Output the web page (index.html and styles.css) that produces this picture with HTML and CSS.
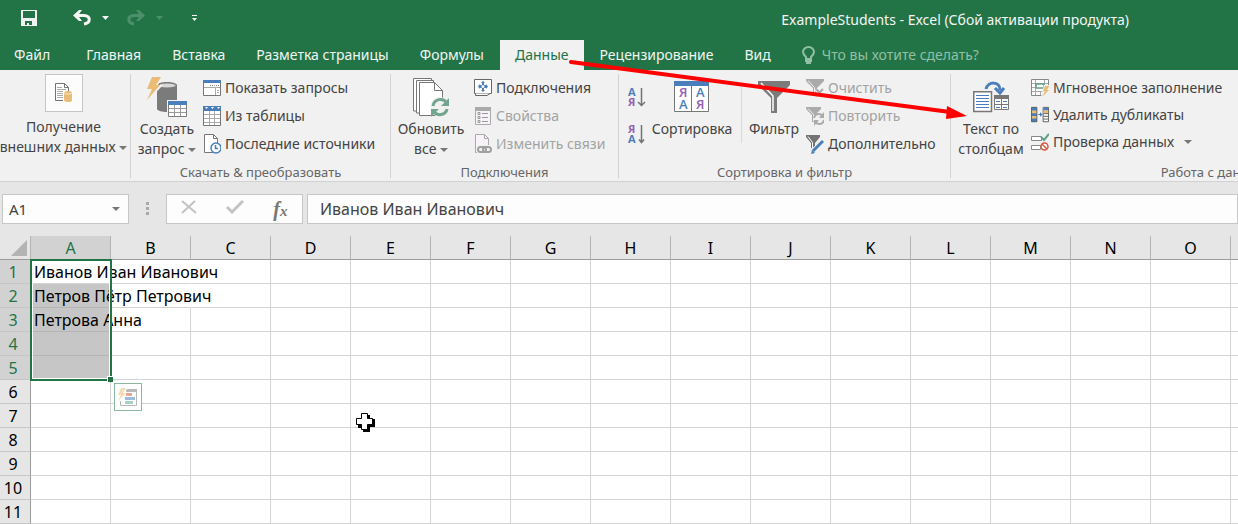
FILE: index.html
```html
<!DOCTYPE html>
<html lang="ru">
<head>
<meta charset="utf-8">
<title>ExampleStudents - Excel</title>
<link rel="stylesheet" href="styles.css">
</head>
<body>
<div class="app">
  <header class="titlebar">
    <div class="quick">
      <button class="qbtn save" aria-label="Сохранить"><svg width="16" height="16" viewBox="0 0 16 16"><path fill="#f0f3f1" fill-rule="evenodd" d="M0 0H16V16H0ZM2 1V8H14V1ZM4 11V15H6V13H8V15H11V11Z"/></svg></button>
      <button class="qbtn undo" aria-label="Отменить"><svg width="18" height="16" viewBox="0 0 18 16"><path fill="none" stroke="#f5f5f5" stroke-width="3" d="M3 5.500H11C18 6 18 13 11 14"/><path fill="#f5f5f5" d="M0 5.500 6 0H9L5 5.500 9 11H6Z"/></svg></button>
      <button class="qbtn drop" aria-label="Список отмены"><svg width="7" height="4"><path fill="#f5f5f5" d="M0 0H7L3.500 4Z"/></svg></button>
      <button class="qbtn redo" aria-label="Вернуть" disabled><svg width="18" height="16" viewBox="0 0 18 16"><path fill="none" stroke="#4e8f6b" stroke-width="3" d="M15 5.500H7C0 6 0 13 7 14"/><path fill="#4e8f6b" d="M18 5.500 12 0H9L13 5.500 9 11H12Z"/></svg></button>
      <button class="qbtn drop" aria-label="Список возврата" disabled><svg width="7" height="4"><path fill="#4e8f6b" d="M0 0H7L3.500 4Z"/></svg></button>
      <button class="qbtn more" aria-label="Настройка панели"><svg width="5" height="6"><path fill="#f5f5f5" d="M0 0H5V1H0ZM0 3H5L2.500 6Z"/></svg></button>
    </div>
    <h1 class="doc">ExampleStudents - Excel (Сбой активации продукта)</h1>
  </header>

  <nav class="tabs">
    <button class="tab file">Файл</button>
    <button class="tab">Главная</button>
    <button class="tab">Вставка</button>
    <button class="tab">Разметка страницы</button>
    <button class="tab">Формулы</button>
    <button class="tab active">Данные</button>
    <button class="tab">Рецензирование</button>
    <button class="tab">Вид</button>
    <button class="tab tell"><svg width="13" height="18" viewBox="0 0 13 18"><path fill="none" stroke="#93bfa5" stroke-width="2" d="M4 13V11C2 9 1 8 1 6A5.500 5 0 0 1 12 6C12 8 11 9 9 11V13Z"/><path fill="#93bfa5" d="M3 14H10V16H9V18H4V16H3Z"/></svg>Что вы хотите сделать?</button>
  </nav>

  <main class="ribbon">
    <section class="group get">
      <div class="body">
        <button class="big">
          <span class="pic"><span class="frame"><svg width="18" height="20" viewBox="0 0 18 20"><path fill="#fff" stroke="#737373" d="M.5.500H9.500L13.500 4.500V17.500H.5Z"/><path fill="none" stroke="#737373" d="M9.500.5V4.500H13.500"/><path stroke="#aaa" d="M2 4.500H7M2 6.500H11M2 8.500H11M2 10.500H9M2 12.500H9M2 14.500H9"/><path fill="#fff" d="M8 8H18V20H8Z"/><path fill="#e9bd77" d="M9 9.500C10 7.500 17 7.500 17 9.500V17.500C17 19.500 10 19.500 9 17.500Z"/><path fill="none" stroke="#fbe9c8" d="M9 10C11 11.500 15 11.500 17 10"/></svg></span></span>
          <span>Получение</span><span class="nw">внешних данных <i class="caret"></i></span>
        </button>
      </div>
    </section>

    <section class="group query">
      <div class="body">
        <button class="big w72">
          <span class="pic"><svg width="40" height="40" viewBox="0 0 40 40"><path fill="#7b7b7b" d="M10 8C11 4 29 4 30 8V32C29 36 11 36 10 32Z"/><ellipse cx="20" cy="8.500" rx="9" ry="2.500" fill="#d8d8d8" stroke="#7b7b7b"/><path fill="#f1f1f1" d="M4 0H15L11 8H16L0 25 5 12H0Z"/><path fill="#eabb73" d="M5 0H14L9 8H13L0 23 5 12H0Z"/><path fill="#f1f1f1" d="M20 23H40V40H20Z"/><path fill="#fff" stroke="#7b7b7b" d="M21.500 24.500H39.500V39.500H21.500Z"/><path fill="#4a7ebb" d="M21 24H40V28H21Z"/><path stroke="#999" d="M22 31.500H39M22 35.500H39M27.500 28V39M33.500 28V39"/></svg></span>
          <span>Создать</span><span class="nw">запрос <i class="caret"></i></span>
        </button>
        <div class="stack">
          <button class="small"><svg width="18" height="18" viewBox="0 0 18 18"><path fill="#fff" stroke="#777" d="M.5 1.500H17.500V16.500H.5Z"/><path fill="#4a7ebb" d="M0 1H18V4H0Z"/><path fill="none" stroke="#aaa" d="M1 8.500H17M12.500 8V16M14 11.500H16M14 13.500H16"/><path stroke="#888" stroke-dasharray="1 1" d="M7 6.500H16"/></svg>Показать запросы</button>
          <button class="small"><svg width="18" height="20" viewBox="0 0 18 20"><path fill="#fff" stroke="#777" d="M.5.500H17.500V19.500H.5Z"/><path fill="#4a7ebb" d="M0 0H18V5H0Z"/><path stroke="#aaa" d="M1 8.500H17M1 12.500H17M1 16.500H17M6.500 5V19M11.500 5V19"/><path fill="#fff" d="M2 1H5L3.500 3ZM8 1H11L9.500 3ZM14 1H17L15.500 3Z"/></svg>Из таблицы</button>
          <button class="small"><svg width="18" height="20" viewBox="0 0 18 20"><path fill="#fff" stroke="#777" d="M1.500.500H10.500L14.500 4.500V18.500H1.500Z"/><path fill="none" stroke="#777" d="M10.500.5V4.500H14.500"/><circle cx="13" cy="14" r="5" fill="#fff" stroke="#4a7ebb" stroke-width="1.500"/><path fill="none" stroke="#4a7ebb" stroke-width="1.500" d="M12.500 11V14.500H15"/></svg>Последние источники</button>
        </div>
      </div>
      <h2 class="caption">Скачать &amp; преобразовать</h2>
    </section>

    <section class="group conn">
      <div class="body">
        <button class="big w80">
          <span class="pic"><svg width="37" height="40" viewBox="0 0 37 40"><path fill="#fff" stroke="#777" d="M.5 34V1.500H18.500V34Z"/><path fill="#fff" stroke="#777" d="M3.500 36V3.500H20.500V36Z"/><path fill="#fff" stroke="#777" d="M6.500 5.500H21.500L29.500 13.500V38.500H6.500Z"/><path fill="none" stroke="#777" d="M21.500 5.500V13.500H29.500"/><circle cx="27" cy="30" r="10" fill="#f1f1f1"/><path fill="none" stroke="#71a590" stroke-width="3" d="M20 29C21 22 30 20 34 26M34 32C33 38 24 40 20 34"/><path fill="#71a590" d="M36 21V29H28ZM18 40V32H26Z"/></svg></span>
          <span>Обновить</span><span>все <i class="caret"></i></span>
        </button>
        <div class="stack">
          <button class="small"><svg width="18" height="18" viewBox="0 0 18 18"><path fill="#fff" stroke="#666" d="M.5.500H17.500V14.500H.5Z"/><path fill="#fff" stroke="#666" d="M1.500 14.500V16.500H13L16 14.500"/><path fill="#4a7ebb" d="M9 2 11 4H10V6H12V5L14 7.500 12 10V9H10V11H11L9 13 7 11H8V9H6V10L4 7.500 6 5V6H8V4H7Z"/><circle cx="9" cy="7.500" r="1.500" fill="#fff"/></svg>Подключения</button>
          <button class="small" disabled><svg width="18" height="18" viewBox="0 0 18 18"><path fill="#f8f3f9" stroke="#aaa" d="M1.500.500H16.500V17.500H1.500Z"/><path fill="#aaa" d="M1 0H17V4H1Z"/><path fill="none" stroke="#999" d="M8 6.500H14M8 10.500H14M8 14.500H14"/><path fill="none" stroke="#999" d="M4 5.500H6V7.500H4ZM4 9.500H6V11.500H4ZM4 13.500H6V15.500H4Z"/></svg>Свойства</button>
          <button class="small" disabled><svg width="18" height="20" viewBox="0 0 18 20"><path fill="#f8f3f9" stroke="#aaa" d="M1.500.500H10.500L14.500 4.500V18.500H1.500Z"/><path fill="none" stroke="#aaa" d="M10.500.5V4.500H14.500"/><path fill="#f1f1f1" d="M3 11H18V20H3Z"/><rect x="4" y="13" width="8" height="5" rx="2.500" fill="none" stroke="#a0a0a0" stroke-width="2"/><rect x="9" y="13" width="8" height="5" rx="2.500" fill="none" stroke="#a0a0a0" stroke-width="2"/></svg>Изменить связи</button>
        </div>
      </div>
      <h2 class="caption">Подключения</h2>
    </section>

    <section class="group sort">
      <div class="body">
        <div class="sorters">
          <button class="mini" aria-label="Сортировка от А до Я"><svg width="18" height="20" viewBox="0 0 18 20"><text class="ltr blue" x="0" y="9">А</text><text class="ltr violet" x="0" y="19">Я</text><path fill="none" stroke="#737373" stroke-width="1.500" d="M13.500 1V18M10 15 13.500 18.500 17 15"/></svg></button>
          <button class="mini" aria-label="Сортировка от Я до А"><svg width="18" height="20" viewBox="0 0 18 20"><text class="ltr violet" x="0" y="9">Я</text><text class="ltr blue" x="0" y="19">А</text><path fill="none" stroke="#737373" stroke-width="1.500" d="M13.500 1V18M11 15.500 13.500 18.500 16 15.500"/></svg></button>
        </div>
        <button class="big w90">
          <span class="pic"><svg width="36" height="32" viewBox="0 0 36 32"><path fill="#fff" stroke="#777" d="M.5.500H34.500V30.500H.5Z"/><path fill="#4a7ebb" d="M0 0H35V5H0Z"/><path stroke="#777" d="M17.500 5V30"/><text class="ltr12 violet" x="5" y="16">Я</text><text class="ltr12 blue" x="5" y="28">А</text><text class="ltr12 blue" x="22" y="16">А</text><text class="ltr12 violet" x="22" y="28">Я</text></svg></span>
          <span>Сортировка</span>
        </button>
        <div class="divider"></div>
        <button class="big w64">
          <span class="pic"><svg width="32" height="32" viewBox="0 0 32 32"><path fill="#7b7b7b" d="M0 0H32V4L19 17V32H13V17L0 4Z"/><path fill="none" stroke="#fff" stroke-width="1.500" d="M3 2 15 15V30"/></svg></span>
          <span>Фильтр</span>
        </button>
        <div class="stack">
          <button class="small" disabled><svg width="18" height="18" viewBox="0 0 18 18"><path fill="#aaa" d="M0 0H18V2L11 9V17H7V9L0 2Z"/><path stroke="#f1f1f1" fill="none" d="M2 1.500 8.500 8.500V16"/><path stroke="#f1f1f1" stroke-width="4" d="M10 10 18 18M18 10 10 18"/><path stroke="#aaa" stroke-width="2" d="M10 10 17 17M17 10 10 17"/></svg>Очистить</button>
          <button class="small" disabled><svg width="18" height="20" viewBox="0 0 18 20"><path fill="#aaa" d="M0 1H15V3L9 9V16H6V9L0 3Z"/><path stroke="#f1f1f1" fill="none" d="M2 2.500 7.500 8.500V15"/><circle cx="13" cy="13" r="6" fill="#f1f1f1"/><path fill="none" stroke="#aaa" stroke-width="2" d="M8 12C9 7 14 7 17 10M18 14C17 19 12 19 9 16"/><path fill="#aaa" d="M18 6V12H13ZM8 20V14H13Z"/></svg>Повторить</button>
          <button class="small"><svg width="18" height="20" viewBox="0 0 18 20"><path fill="#737373" d="M0 1H14V3L9 9V14H5V9L0 3Z"/><path stroke="#fff" fill="none" d="M2 2.500 6.500 8.500V14"/><path stroke="#f1f1f1" stroke-width="5" d="M6 18 17 7"/><path stroke="#4a7ebb" stroke-width="3" d="M7 17 17 7"/><path fill="#4a7ebb" d="M5 20 6 16 9 19Z"/></svg>Дополнительно</button>
        </div>
      </div>
      <h2 class="caption">Сортировка и фильтр</h2>
    </section>

    <section class="group tools">
      <div class="body">
        <button class="big w80">
          <span class="pic"><svg width="36" height="32" viewBox="0 0 36 32"><path fill="#fff" stroke="#777" stroke-width="1.500" d="M.75 10.750H18.500V30.500H.75Z"/><path stroke="#4a7ebb" d="M3 14.500H16M3 17.500H16M3 20.500H16M3 23.500H16M3 26.500H16"/><path fill="#fff" stroke="#777" d="M21.500 14.500H35.500V28.500H21.500Z"/><path fill="#777" d="M21 14H36V18H21Z"/><path stroke="#777" d="M28.500 18V28M22 23.500H35"/><path stroke="#4a7ebb" d="M23 20.500H27M30 20.500H34M23 26.500H27M30 26.500H34"/><path fill="none" stroke="#4a7ebb" stroke-width="3" d="M13 8C15 0 27 0 27 9"/><path fill="none" stroke="#4a7ebb" stroke-width="3" d="M22 7 27 12 31 7"/></svg></span>
          <span>Текст по</span><span>столбцам</span>
        </button>
        <div class="stack tight">
          <button class="small"><svg width="18" height="18" viewBox="0 0 18 18"><path fill="#fff" stroke="#888" d="M.5.500H17.500V16.500H.5Z"/><path stroke="#aaa" d="M1 4.500H17M1 8.500H17M1 12.500H17M4.500 1V16M13.500 1V16M9.500 12V16"/><path fill="#fff" stroke="#5f9f86" stroke-width="1.500" d="M5 5H13V9H5Z"/><path fill="#f1f1f1" d="M13 6H18V18H10Z"/><path fill="#eabb73" d="M14 7H18L16 11H18L11 18 14 12H12Z"/></svg>Мгновенное заполнение</button>
          <button class="small"><svg width="18" height="18" viewBox="0 0 20 18"><path fill="#4a7ebb" stroke="#555" d="M.5.500H6.500V16.500H.5Z"/><path fill="#eabb73" d="M1 4H6V7H1ZM1 10H6V13H1Z"/><path fill="#fff" stroke="#555" d="M13.500.500H19.500V16.500H13.500Z"/><path fill="#4a7ebb" d="M14 1H19V4H14Z"/><path fill="#eabb73" d="M14 4H19V7H14Z"/><path stroke="#555" d="M14 7.500H19M14 10.500H19M14 13.500H19"/><path fill="#4a7ebb" d="M8 8H10V6L13 8.500 10 11V9H8Z"/></svg>Удалить дубликаты</button>
          <button class="small"><svg width="18" height="18" viewBox="0 0 18 18"><path fill="#fff" stroke="#888" d="M.5 3.500H10.500V7.500H.5ZM.5 12.500H9.500V16.500H.5Z"/><path fill="none" stroke="#5f9f86" stroke-width="2" d="M10 4 13 7 18 1"/><circle cx="13.500" cy="13.500" r="3.500" fill="#fff" stroke="#d9583f" stroke-width="1.500"/><path stroke="#d9583f" stroke-width="1.500" d="M11 11 16 16"/></svg>Проверка данных <i class="caret far"></i></button>
        </div>
      </div>
      <h2 class="caption">Работа с данными</h2>
    </section>
  </main>

  <div class="formula">
    <div class="namebox"><input aria-label="Имя" value="A1"><button aria-label="Список имён"><i class="caret"></i></button></div>
    <div class="dots"><i></i><i></i><i></i></div>
    <div class="fxbar">
      <button aria-label="Отмена"><svg width="16" height="14"><path stroke="#c3c3c3" stroke-width="2" d="M1 1 15 13M14 1 1 13"/></svg></button>
      <button aria-label="Ввод"><svg width="18" height="14"><path fill="none" stroke="#c3c3c3" stroke-width="3" d="M1 7 6 12 17 1"/></svg></button>
      <button class="fx" aria-label="Вставить функцию"><span>f</span><sub>x</sub></button>
    </div>
    <input class="content" aria-label="Строка формул" value="Иванов Иван Иванович">
  </div>

  <div class="sheet">
    <table class="grid">
      <colgroup><col class="c0"><col span="16" class="c"></colgroup>
      <thead><tr><th class="corner"><svg width="16" height="16"><path fill="#b4b4b4" d="M16 0V16H0Z"/></svg></th><th class="on">A</th><th>B</th><th>C</th><th>D</th><th>E</th><th>F</th><th>G</th><th>H</th><th>I</th><th>J</th><th>K</th><th>L</th><th>M</th><th>N</th><th>O</th><th></th></tr></thead>
      <tbody>
        <tr class="on"><th>1</th><td>Иванов Иван Иванович</td><td class="open"></td><td></td><td></td><td></td><td></td><td></td><td></td><td></td><td></td><td></td><td></td><td></td><td></td><td></td><td></td></tr>
        <tr class="on"><th>2</th><td class="sel">Петров Пётр Петрович</td><td class="open"></td><td></td><td></td><td></td><td></td><td></td><td></td><td></td><td></td><td></td><td></td><td></td><td></td><td></td><td></td></tr>
        <tr class="on"><th>3</th><td class="sel">Петрова Анна</td><td></td><td></td><td></td><td></td><td></td><td></td><td></td><td></td><td></td><td></td><td></td><td></td><td></td><td></td><td></td></tr>
        <tr class="on"><th>4</th><td class="sel"></td><td></td><td></td><td></td><td></td><td></td><td></td><td></td><td></td><td></td><td></td><td></td><td></td><td></td><td></td><td></td></tr>
        <tr class="on"><th>5</th><td class="sel"></td><td></td><td></td><td></td><td></td><td></td><td></td><td></td><td></td><td></td><td></td><td></td><td></td><td></td><td></td><td></td></tr>
        <tr><th>6</th><td></td><td></td><td></td><td></td><td></td><td></td><td></td><td></td><td></td><td></td><td></td><td></td><td></td><td></td><td></td><td></td></tr>
        <tr><th>7</th><td></td><td></td><td></td><td></td><td></td><td></td><td></td><td></td><td></td><td></td><td></td><td></td><td></td><td></td><td></td><td></td></tr>
        <tr><th>8</th><td></td><td></td><td></td><td></td><td></td><td></td><td></td><td></td><td></td><td></td><td></td><td></td><td></td><td></td><td></td><td></td></tr>
        <tr><th>9</th><td></td><td></td><td></td><td></td><td></td><td></td><td></td><td></td><td></td><td></td><td></td><td></td><td></td><td></td><td></td><td></td></tr>
        <tr><th>10</th><td></td><td></td><td></td><td></td><td></td><td></td><td></td><td></td><td></td><td></td><td></td><td></td><td></td><td></td><td></td><td></td></tr>
        <tr><th>11</th><td></td><td></td><td></td><td></td><td></td><td></td><td></td><td></td><td></td><td></td><td></td><td></td><td></td><td></td><td></td><td></td></tr>
      </tbody>
    </table>
    <div class="selection"><i class="handle"></i></div>
    <button class="analysis" aria-label="Быстрый анализ"><svg width="20" height="20" viewBox="0 0 20 20"><path fill="#fff" stroke="#b9b9b9" d="M2.500 2.500H18.500V18.500H2.500Z"/><path fill="#b9b9b9" d="M7 2H19V5H7Z"/><path fill="#fff" d="M0 0H9L6 14H0Z"/><path fill="#f3ddb4" d="M3 1H8L5 6H8L0 14 3 8H0Z"/><path fill="#e9a493" d="M8 6H14V9H8Z"/><path fill="#9db9dc" d="M7 10H17V13H7Z"/><path fill="#accfc3" d="M7 14H15V17H7Z"/></svg></button>
    <svg class="cursor" width="20" height="20" viewBox="0 0 20 20"><path d="M7 2H14V6H19V14H14V19H7V15H2V7H7Z"/><path fill="#fff" stroke="#000" d="M5.500.500H11.500V5.500H16.500V11.500H11.500V16.500H5.500V11.500H.5V5.500H5.500Z"/></svg>
  </div>
  <svg class="arrow" width="400" height="62" viewBox="0 0 400 62"><path stroke="#f00" stroke-width="4" stroke-linecap="round" d="M2 2 381 52"/><path fill="#f00" d="M378 46 398 56 377 59Z"/></svg>
</div>
</body>
</html>
```
FILE: styles.css
```css
* { box-sizing: border-box; }
body { margin: 0; background: #fff; font: 14px/20px "Noto Sans", "Open Sans", sans-serif; color: #444; }
button, input { font: inherit; color: inherit; border: 0; padding: 0; background: none; }
h1, h2 { margin: 0; font-weight: normal; }
.app { position: relative; overflow: hidden; min-height: 100vh; }
.titlebar { display: flex; align-items: center; justify-content: space-between; height: 40px; background: #227447; color: #f5f5f5; padding-right: 109px; }
.quick { display: flex; align-items: center; padding: 0 0 4px 21px; }
.qbtn { display: flex; }
.undo { margin-left: 36px; }
.drop { margin-left: 11px; }
.redo { margin-left: 18px; }
.more { margin-left: 29px; }
.doc { font-size: 14px; }
.tabs { display: flex; gap: 1px; height: 30px; background: #227447; color: #f0f5f2; }
.tab { flex: none; padding: 0 15px; white-space: nowrap; }
.tab.file { padding: 0 20px 0 14px; }
.tab.active { background: #f1f1f1; color: #227447; }
.tell { display: flex; align-items: center; gap: 7px; color: #93bfa5; }
.ribbon { display: flex; padding: 4px 0 3px; background: #f1f1f1; border-bottom: 1px solid #d2d2d2; overflow: hidden; }
.group { flex: none; border-right: 1px solid #d2d2d2; }
.get { width: 131px; }
.query { width: 260px; }
.conn { width: 228px; }
.sort { width: 332px; }
.tools { width: 536px; }
.body { display: flex; height: 92px; }
.caption { font-size: 13px; line-height: 12px; text-align: center; color: #666; }
.big { display: flex; flex-direction: column; align-items: center; white-space: nowrap; }
.get .big { width: 127px; }
.w72 { width: 72px; }
.w80 { width: 80px; }
.w90 { width: 90px; }
.w64 { width: 64px; }
.pic { display: flex; align-items: center; justify-content: center; height: 45px; }
.get .pic { height: 43px; align-items: flex-start; }
.frame { display: flex; align-items: center; justify-content: center; width: 38px; height: 38px; background: #fcfcfc; border: 1px solid #c6c6c6; }
.stack { display: flex; flex-direction: column; }
.conn .stack { margin-left: 3px; }
.small { display: flex; align-items: center; gap: 4px; height: 28px; white-space: nowrap; }
.small svg { flex: none; }
.tight .small { height: 27px; }
.small:disabled { color: #a3a3a3; }
.caret { display: inline-block; border: 4px solid transparent; border-top-color: #777; border-bottom: 0; vertical-align: middle; }
.far { margin-left: 6px; }
.sorters { display: flex; flex-direction: column; gap: 17px; padding: 13px 0 0 9px; width: 28px; }
.mini { display: flex; }
.mini svg { overflow: visible; }
.ltr { font: bold 11px "Open Sans", sans-serif; }
.ltr12 { font: 600 13px "Open Sans", sans-serif; }
.blue { fill: #4a7ebb; }
.violet { fill: #9560b4; }
.divider { width: 1px; height: 56px; margin-top: 13px; background: #d9d9d9; margin-left: 4px; }
.formula { display: flex; gap: 4px; padding: 12px 0 12px 2px; background: #e6e6e6; }
.namebox, .fxbar, .content { height: 30px; background: #fdfdfd; border: 1px solid #c6c6c6; }
.namebox { display: flex; align-items: center; width: 127px; padding: 0 8px 0 6px; }
.namebox input { flex: 1; min-width: 0; font-size: 15px; }
.namebox button { display: flex; }
.dots { display: flex; flex-direction: column; gap: 2px; width: 29px; padding: 8px 0 0 13px; }
.dots i { width: 3px; height: 3px; background: #aaa; }
.fxbar { display: flex; align-items: center; justify-content: space-around; width: 137px; }
.fx { font: italic bold 20px/20px "Liberation Serif", serif; color: #777; }
.fx sub { font-size: 15px; line-height: 10px; vertical-align: baseline; }
.content { flex: 1; min-width: 0; padding-left: 12px; font-size: 16px; }
.sheet { position: relative; }
.grid { table-layout: fixed; width: 1311px; border-collapse: separate; border-spacing: 0; color: #000; }
.c0 { width: 31px; }
.c { width: 80px; }
.grid th, .grid td { height: 24px; padding: 0; line-height: 20px; border-right: 1px solid #d4d4d4; border-bottom: 1px solid #d4d4d4; }
.grid th { font-weight: normal; font-size: 16px; background: #e6e6e6; }
.grid thead th { border-bottom-color: #9b9b9b; border-right-color: #b4b4b4; }
.grid tbody th { border-right-color: #9b9b9b; border-bottom-color: #c6c6c6; padding-right: 4px; }
.grid th.on, .grid .on th { background: #d2d2d2; color: #227447; }
.grid td { padding-left: 3px; white-space: nowrap; font-size: 16px; }
.grid td.open { border-right-color: transparent; }
.grid td.sel { background: #c6c6c6; border-bottom-color: #b4b4b4; }
.corner svg { display: block; margin-left: 11px; }
.selection { position: absolute; left: 30px; top: 23px; width: 82px; height: 122px; border: 2px solid #227447; box-shadow: inset 0 0 0 1px #fff; }
.handle { position: absolute; right: -3px; bottom: -3px; width: 6px; height: 6px; background: #227447; border: 1px solid #fff; border-width: 1px 0 0 1px; }
.analysis { position: absolute; left: 114px; top: 147px; width: 28px; height: 28px; background: #fff; border: 1px solid #8cb8a0; display: flex; align-items: center; justify-content: center; }
.cursor { position: absolute; left: 356px; top: 177px; }
.arrow { position: absolute; left: 569px; top: 60px; pointer-events: none; }
```
